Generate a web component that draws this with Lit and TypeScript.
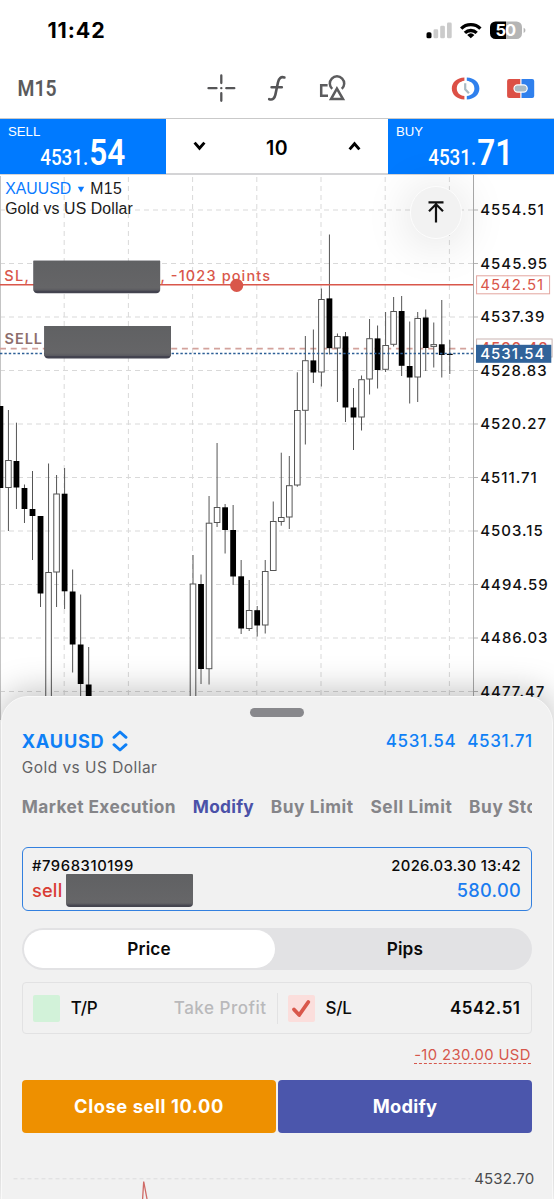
import { LitElement, html, svg, css } from "lit";
import { customElement } from "lit/decorators.js";

// [index, high, low, bodyTop, bodyBottom, bearish]
type Candle = [number, number, number, number, number, boolean];

const CANDLES: Candle[] = [
  [0, 406, 488, 406, 488, true],
  [1, 410, 531, 460.5, 487.5, false],
  [2, 422.7, 509, 461, 487.5, true],
  [3, 484.5, 523, 488, 509, true],
  [4, 471, 560, 509, 516, true],
  [5, 516, 607, 516, 593.5, true],
  [6, 463.5, 705, 572.5, 705, false],
  [7, 475, 607, 494, 572, false],
  [8, 468, 609, 493.7, 591.3, true],
  [9, 569.5, 672.5, 591.5, 644.5, true],
  [10, 594.5, 705, 644.5, 684, true],
  [11, 647, 705, 684.5, 705, true],
  [24, 555, 705, 584, 705, false],
  [25, 574.5, 684, 584, 669, true],
  [26, 496, 684.5, 523.2, 668.7, false],
  [27, 443, 527, 507.5, 522.5, false],
  [28, 504, 553.5, 507.3, 530, true],
  [29, 505, 585, 530, 576.5, true],
  [30, 560, 634, 576.3, 628.5, true],
  [31, 580, 631, 610.5, 628.5, false],
  [32, 606, 636.5, 610.2, 625.5, true],
  [33, 560, 633.5, 571.5, 625, false],
  [34, 501.5, 571, 521.5, 570.5, false],
  [35, 452.7, 525.7, 517.5, 521.5, false],
  [36, 456, 529, 485.7, 517, false],
  [37, 372.3, 486.7, 410.5, 485, false],
  [38, 336, 444.5, 360.7, 410.3, false],
  [39, 329.5, 383, 360.4, 372.5, true],
  [40, 288.5, 386.5, 299.5, 372, false],
  [41, 234.5, 354.5, 298.4, 348.2, true],
  [42, 333.5, 402, 336.5, 348, false],
  [43, 332, 422, 336.3, 407.5, true],
  [44, 388, 450, 407.5, 417.5, true],
  [45, 375.5, 430.5, 379.7, 417, false],
  [46, 319, 394.5, 338.7, 379, false],
  [47, 325.5, 388.5, 338.4, 370, true],
  [48, 312, 372, 345.5, 369.3, false],
  [49, 297, 346.5, 311.5, 344.3, false],
  [50, 296, 376, 311, 365.8, true],
  [51, 321.5, 403.5, 366, 377.5, true],
  [52, 312, 402, 318.5, 377, false],
  [53, 309.5, 371, 317.5, 348, true],
  [54, 322.5, 367.5, 344.6, 346.4, false],
  [55, 300, 377.5, 344.3, 355, true],
  [56, 340, 374, 353.8, 355, true],
];

const PRICES = ["4554.51", "4545.95", "4537.39", "4528.83", "4520.27", "4511.71", "4503.15", "4494.59", "4486.03", "4477.47"];
const GRID_X = [64.2, 128.4, 192.6, 256.8, 321, 385.2, 449.4];
const gridY = (i: number) => 210 + i * 53.5;

@customElement("price-chart")
class PriceChart extends LitElement {
  static styles = css`
    :host { display: block; }
    svg { display: block; }
    .axis { font: 500 15px Inter, sans-serif; letter-spacing: 0.97px; fill: #111; }
    .grid { stroke: #d9d9d9; stroke-width: 1; stroke-dasharray: 5 4; fill: none; }
    .wick { stroke: #555; stroke-width: 1; }
    .bull { fill: #fff; stroke: #555; stroke-width: 1; }
    .bear { fill: #000; }
    .line-label { font: 500 14.5px Inter, sans-serif; fill: #d9574b; }
    .entry { fill: #8d6e6c; font-weight: 600; }
    .stop { fill: #d9574b; }
    .light { font-weight: 400; }
    .now { fill: #fff; }
    .head { font: 15.8px "Liberation Sans", Arial, sans-serif; fill: #1a1a1a; }
    .link { fill: #0a7aff; }
  `;

  private candle([i, hi, lo, top, bottom, bearish]: Candle) {
    const x = 0.4 + i * 8.025;
    return svg`
      <line class="wick" x1=${x} x2=${x} y1=${hi} y2=${lo}></line>
      ${bearish
        ? svg`<rect class="bear" x=${x - 2.9} y=${top} width="5.8" height=${bottom - top}></rect>`
        : svg`<rect class="bull" x=${x - 2.8} y=${top} width="5.6" height=${bottom - top}></rect>`}
    `;
  }

  private mask(x: number, y: number) {
    return svg`
      <path d="M${x} ${y}h126.6v28.5q0 4 -4 4h-118.6q-4 0 -4 -4z" fill="#43434f"></path>
      <path d="M${x} ${y}h126.6v30h-126.6z" fill="url(#plate)"></path>
    `;
  }

  render() {
    return html`<svg width="554" height="545" viewBox="0 175 554 545">
      <defs>
        <linearGradient id="plate" x1="0" y1="0" x2="0" y2="1">
          <stop offset="0" stop-color="#606163"></stop>
          <stop offset="0.9" stop-color="#656567"></stop>
          <stop offset="1" stop-color="#58585e"></stop>
        </linearGradient>
      </defs>
      ${GRID_X.map((x) => svg`<line class="grid" x1=${x} x2=${x} y1="177" y2="720"></line>`)}
      ${PRICES.map((_, i) => svg`<line class="grid" x1="0" x2="473" y1=${gridY(i)} y2=${gridY(i)}></line>`)}
      <line x1="0.5" x2="0.5" y1="176" y2="720" stroke="#c4c4c4"></line>
      <line x1="473.5" x2="473.5" y1="175" y2="720" stroke="#a9a9a9"></line>
      ${PRICES.map((p, i) => svg`
        <line x1="474" x2="478" y1=${gridY(i)} y2=${gridY(i)} stroke="#b5b5b5"></line>
        <text class="axis" x="480.3" y=${gridY(i) + 5.4}>${p}</text>`)}
      <line x1="0" x2="473" y1="348.6" y2="348.6" stroke="#d3a29c" stroke-width="1.6" stroke-dasharray="6 4.7"></line>
      ${CANDLES.map((c) => this.candle(c))}
      <line x1="0" x2="473" y1="353.4" y2="353.4" stroke="#2d5f96" stroke-width="1.5" stroke-dasharray="2.4 2"></line>
      <line x1="0" x2="473" y1="284.7" y2="284.7" stroke="#d9574b" stroke-width="1.4"></line>
      <circle cx="236.7" cy="285.3" r="6.6" fill="#d9574b"></circle>
      <text class="line-label" x="4.3" y="280.6" textLength="24.5">SL,</text>
      <text class="line-label" x="160.5" y="280.6" textLength="109.5">, -1023 points</text>
      <text class="line-label entry" x="4.5" y="344.3" textLength="37.5">SELL</text>
      ${this.mask(33.5, 260.8)} ${this.mask(44.3, 326)}
      <rect x="476.6" y="275.8" width="73" height="18" fill="#fff" stroke="#e3a59f"></rect>
      <text class="axis stop light" x="480.3" y="290.3">4542.51</text>
      <rect x="476.6" y="339" width="75.5" height="18" fill="#fff" stroke="#c9b4b2"></rect>
      <text class="axis stop" x="480.3" y="353">4532.48</text>
      <rect x="476" y="344.8" width="75.3" height="18" fill="#30639a"></rect>
      <text class="axis now" x="480.3" y="359">4531.54</text>
      <text class="head link" x="5.2" y="194.4" textLength="66">XAUUSD</text>
      <path d="M77.8 186.8h6.4l-3.2 5.8z" fill="#0a7aff"></path>
      <text class="head" x="90.3" y="194.4" textLength="31.5">M15</text>
      <text class="head" x="5.2" y="213.9" textLength="127.5">Gold vs US Dollar</text>
    </svg>`;
  }
}

@customElement("order-sheet")
class OrderSheet extends LitElement {
  static styles = css`
    :host { display: block; box-sizing: border-box; background: #f1f1f1; border: 1px solid #f9f9f9; border-radius: 27px 27px 0 0;
      box-shadow: 0 -4px 34px rgba(0, 0, 0, 0.26); padding: 0 19.7px; font-family: Inter, sans-serif; color: #0a0a0a; overflow: hidden; }
    .handle { width: 53.5px; height: 9px; border-radius: 5px; background: #88888c; margin: 11.3px auto 0; }
    .row { display: flex; align-items: center; justify-content: space-between; white-space: nowrap; }
    .title { margin-top: 11.7px; height: 24px; color: #0f80f6; }
    .symbol { display: flex; align-items: center; gap: 7px; font-size: 18.2px; font-weight: 700; letter-spacing: 0.75px; }
    .quotes { display: flex; gap: 11px; font-size: 17px; font-weight: 500; letter-spacing: 0.65px; margin-right: -0.5px; }
    .desc { margin-top: 4.3px; line-height: 22px; font-size: 15.4px; font-weight: 400; letter-spacing: 0.5px; color: #626264; }
    .tabs { display: flex; gap: 16.8px; overflow: hidden; margin-top: 15px; line-height: 26px; font-size: 17.3px; font-weight: 700; letter-spacing: 0.55px; color: #858589; white-space: nowrap; }
    .tabs .first { letter-spacing: 0.42px; }
    .tabs .on { color: #4b51a8; letter-spacing: 0.28px; }
    .deal { margin-top: 26.5px; height: 64.5px; box-sizing: border-box; border: 1.5px solid #3380df; border-radius: 6px; padding: 8px 10.3px 0 9.2px; }
    .deal .a { height: 20px; font-size: 14.8px; font-weight: 500; letter-spacing: 0.3px; }
    .deal .id { letter-spacing: 0.6px; }
    .deal .b { height: 28px; font-size: 18.2px; font-weight: 500; }
    .sell { display: flex; align-items: center; gap: 3.2px; color: #d93d34; letter-spacing: 0.25px; }
    .profit { color: #1a7cf0; letter-spacing: 0.3px; }
    .plate { width: 127px; height: 33px; background: linear-gradient(#606163, #666668 88%, #45454f 96%); border-radius: 1px 1px 4px 4px; margin-top: 1.5px; }
    .seg { margin-top: 17.2px; height: 42px; box-sizing: border-box; padding: 2px; display: grid; grid-template-columns: 1fr 1fr; gap: 5px; background: #e2e2e4; border-radius: 21px; font-size: 17.2px; font-weight: 600; letter-spacing: 0.15px; text-align: center; line-height: 38px; }
    .seg .on { background: #fff; border-radius: 19px; height: 37.5px; }
    .levels { margin-top: 11.8px; height: 51.5px; box-sizing: border-box; border: 1.2px solid #e2e2e3; border-radius: 4px; display: grid; grid-template-columns: 1fr 1px 1fr; align-items: center; font-size: 17px; font-weight: 500; }
    .level { display: flex; align-items: center; padding: 0 10px; }
    .level span { margin-left: 11px; letter-spacing: -0.2px; }
    .level b { margin-left: auto; font-weight: 500; letter-spacing: 0.5px; }
    .level .muted { color: #b9b9bb; }
    .level .val { font-weight: 600; letter-spacing: 0.5px; margin-right: 0.8px; }
    .sep { height: 31px; background: #e2e2e3; }
    .box { width: 27px; height: 27px; border-radius: 2px; background: #d2f2d9; }
    .box.red { background: #fbdedc; }
    .risk { margin-top: 12.3px; height: 20px; display: flex; justify-content: flex-end; }
    .risk span { font-size: 14.8px; line-height: 18px; letter-spacing: 0.38px; color: #d6574c; height: 17px; border-bottom: 1.3px dashed #d6574c; margin-right: 1.5px; white-space: nowrap; }
    .actions { margin-top: 14.3px; display: grid; grid-template-columns: 1fr 1fr; gap: 1.5px; text-align: center; color: #fff; font-size: 18.3px; font-weight: 700; line-height: 52.5px; }
    .actions div { border-radius: 4px; background: #4b56ac; letter-spacing: 0.3px; }
    .actions .close { background: #ee9000; letter-spacing: 0.58px; }
    .tick { margin: 29.5px -6px 0 -9px; height: 38px; display: block; }
    .tick text { font: 400 15px Inter, sans-serif; fill: #4b4b4d; }
  `;

  render() {
    return html`
      <div class="handle"></div>
      <div class="row title">
        <div class="symbol">XAUUSD
          <svg width="16" height="22" viewBox="0 0 16 22" fill="none" stroke="#0f80f6" stroke-width="2.9" stroke-linecap="round" stroke-linejoin="round"><path d="M2 7.3 8 2l6 5.3M2 14.7 8 20l6-5.3"></path></svg>
        </div>
        <div class="quotes"><span>4531.54</span><span>4531.71</span></div>
      </div>
      <div class="desc">Gold vs US Dollar</div>
      <div class="tabs"><span class="first">Market Execution</span><span class="on">Modify</span><span>Buy Limit</span><span>Sell Limit</span><span>Buy Stop</span></div>
      <div class="deal">
        <div class="row a"><span class="id">#7968310199</span><span>2026.03.30 13:42</span></div>
        <div class="row b"><span class="sell">sell <i class="plate"></i></span><span class="profit">580.00</span></div>
      </div>
      <div class="seg"><div class="on">Price</div><div>Pips</div></div>
      <div class="levels">
        <div class="level"><div class="box"></div><span>T/P</span><b class="muted">Take Profit</b></div>
        <div class="sep"></div>
        <div class="level"><div class="box red">
          <svg width="27" height="27" viewBox="0 0 27 27" fill="none" stroke="#d9574b" stroke-width="3.8" stroke-linecap="round" stroke-linejoin="round"><path d="M6 14.5 11.2 20 20.3 7"></path></svg>
        </div><span>S/L</span><b class="val">4542.51</b></div>
      </div>
      <div class="risk"><span>-10 230.00 USD</span></div>
      <div class="actions"><div class="close">Close sell 10.00</div><div>Modify</div></div>
      <svg class="tick" width="526" height="38" viewBox="12.5 1162.5 526 38">
        <line x1="13" x2="470" y1="1179.3" y2="1179.3" stroke="#dcdcdd" stroke-dasharray="4 3"></line>
        <text x="473.7" y="1184.4" textLength="60">4532.70</text>
        <path d="M142 1201 143.2 1182 146.8 1201" fill="none" stroke="#cf6a66" stroke-width="1.3"></path>
      </svg>
    `;
  }
}

@customElement("app-root")
class AppRoot extends LitElement {
  static styles = css`
    :host { display: block; position: relative; width: 554px; height: 1199px; overflow: hidden; background: #fff; font-family: Inter, sans-serif; color: #000; }
    svg { display: block; }
    .status { height: 60px; display: flex; align-items: center; padding: 0 28px 0 47.5px; box-sizing: border-box; }
    .time { font-size: 21.4px; font-weight: 700; letter-spacing: 0.9px; margin-right: auto; }
    .tools { height: 58px; display: block; }
    .quote { height: 57px; box-sizing: border-box; border-top: 1px solid #c9c9c9; border-bottom: 2px solid #d4d4d6; display: grid; grid-template-columns: 166px 222px 166px; }
    .volume { display: flex; align-items: center; justify-content: space-between; padding: 0 25.5px; font-size: 19.5px; font-weight: 600; }
    .volume span { margin: 2px 0 0 0; letter-spacing: 0.4px; }
    .side { font: 13.2px "Liberation Sans", Arial, sans-serif; fill: #fff; }
    .num { font-family: Roboto, sans-serif; font-weight: 500; fill: #fff; }
    .big { font-weight: 600; }
    .tf { font: 600 22px Roboto, sans-serif; fill: #5a5a5c; }
    .batt { font: 700 16.5px Inter, sans-serif; fill: #fff; }
    .up { position: absolute; left: 409.5px; top: 186px; width: 52.5px; height: 52.5px; box-sizing: border-box; border-radius: 50%; border: 1.8px solid #fdfdfd; background: #f2f2f2; box-shadow: 0 4px 46px 4px rgba(0, 0, 0, 0.11); display: grid; place-items: center; }
    order-sheet { position: absolute; left: 1px; top: 696px; width: 552px; height: 510px; }
  `;

  private quote(side: string, main: string, frac: string) {
    return html`<svg width="166" height="55" viewBox="0 119 166 55">
      <rect y="119" width="166" height="55" fill="#007aff"></rect>
      <text class="side" x="8" y="136.3">${side}</text>
      <text class="num" x="40.2" y="165" font-size="22" textLength="48" lengthAdjust="spacingAndGlyphs">${main}</text>
      <text class="num big" x="89.3" y="165" font-size="36.5" textLength="36" lengthAdjust="spacingAndGlyphs">${frac}</text>
    </svg>`;
  }

  render() {
    return html`
      <div class="status">
        <span class="time">11:42</span>
        <svg width="100" height="20" viewBox="426 20 100 20">
          <rect x="426.5" y="32.3" width="5" height="6" rx="1.6"></rect>
          <g fill="#cbcbcb"><rect x="433.5" y="29.3" width="4.7" height="9" rx="1.4"></rect><rect x="440.2" y="25.7" width="4.7" height="12.6" rx="1.4"></rect><rect x="447" y="22.5" width="4.7" height="15.8" rx="1.4"></rect></g>
          <g fill="none" stroke="#000" stroke-width="3.3"><path d="M461.2 28.6a13.6 13.6 0 0 1 19.2 0"></path><path d="M464.9 32.9a8.4 8.4 0 0 1 11.8 0"></path></g>
          <path d="M470.8 38.2 467.2 34.9a5.4 5.4 0 0 1 7.2 0z"></path>
          <path d="M506 21.5h-10.5a5.5 5.5 0 0 0-5.5 5.5v6.5a5.5 5.5 0 0 0 5.5 5.5h10.5z"></path>
          <path d="M506 21.5h10.5a5.5 5.5 0 0 1 5.5 5.5v6.5a5.5 5.5 0 0 1-5.5 5.5h-10.5z" fill="#b5b5b5"></path>
          <path d="M523.6 27.7c2.4 1 2.4 4.2 0 5.2z" fill="#b5b5b5"></path>
          <text class="batt" x="495.6" y="36.2" textLength="20.5">50</text>
        </svg>
      </div>
      <svg class="tools" width="554" height="58" viewBox="0 60 554 58">
        <text class="tf" x="17.6" y="95.6" textLength="39" lengthAdjust="spacingAndGlyphs">M15</text>
        <g stroke="#555557" stroke-width="2.3" fill="none" stroke-linecap="round">
          <path d="M208.5 88.2h8M226.3 88.2h8M221.3 75.4v7.6M221.3 93.2v7.6"></path>
          <path d="M221.2 88.2h.2" stroke-width="2.2"></path>
          <path d="M269.2 99.2c3.5 1.2 5.3-.6 6.2-4.6l2.6-12.3c.8-4 2.9-6 6.4-4.8M271.6 87.3h10.2" stroke-width="2.6"></path>
        </g>
        <g stroke="#5c5c5e" stroke-width="2.5" fill="none">
          <path d="M327.6 85.2h-6.4v10.6h6.8"></path>
          <path d="M332.2 88.9a7.2 7.2 0 1 1 9.6 0"></path>
          <path d="M336.9 88.6 331 99.1h12z"></path>
        </g>
        <path d="M464.4 77.4v3.3c-4.6.6-7.6 3.6-7.6 7.7s3 7.1 7.6 7.7v3.3c-7.4-.3-12.6-4.8-12.6-11s5.2-10.7 12.6-11z" fill="#dc5046"></path>
        <path d="M466.8 77.4v3.3c4.6.6 7.6 3.6 7.6 7.7s-3 7.1-7.6 7.7v3.3c7.4-.3 12.6-4.8 12.6-11s-5.2-10.7-12.6-11z" fill="#2f80ed"></path>
        <path d="M465.2 83.2v6.1l3.7 3.9" fill="none" stroke="#a9bac4" stroke-width="2.2"></path>
        <path d="M520.3 79h-11.2a2 2 0 0 0-2 2v15a2 2 0 0 0 2 2h11.2z" fill="#dc5046"></path>
        <path d="M521.5 79h10.7a2 2 0 0 1 2 2v15a2 2 0 0 1-2 2h-10.7z" fill="#2f80ed"></path>
        <rect x="514" y="84.9" width="13.2" height="7.2" rx="3.6" fill="#a9bac4" stroke="#fff" stroke-width="1.2"></rect>
      </svg>
      <div class="quote">
        ${this.quote("SELL", "4531.", "54")}
        <div class="volume">
          <svg width="15" height="12" viewBox="0 0 15 12" fill="none" stroke="#000" stroke-width="2.9"><path d="M2.6 1.6 7.5 7.2l4.9-5.6"></path></svg>
          <span>10</span>
          <svg width="15" height="12" viewBox="0 0 15 12" fill="none" stroke="#000" stroke-width="2.9"><path d="M2.6 8.4 7.5 2.8l4.9 5.6"></path></svg>
        </div>
        ${this.quote("BUY", "4531.", "71")}
      </div>
      <price-chart></price-chart>
      <div class="up"><svg width="18" height="24" viewBox="0 0 18 24" fill="none" stroke="#111" stroke-width="2.2"><path d="M1.5 2.4h15M9 22.5V4M2 11.2 9 4.2l7 7"></path></svg></div>
      <order-sheet></order-sheet>
    `;
  }
}
